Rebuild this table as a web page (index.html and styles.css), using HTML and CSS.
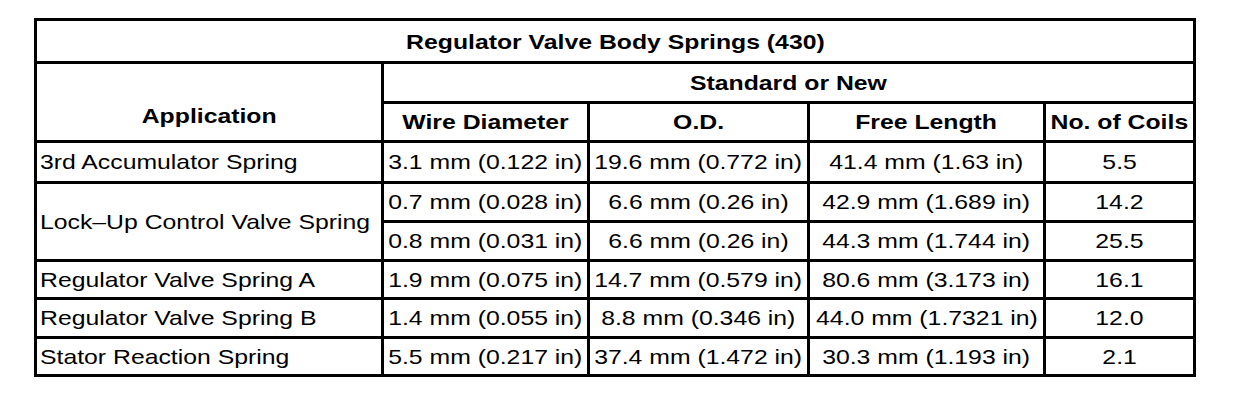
FILE: index.html
```html
<!DOCTYPE html>
<html>
<head>
<meta charset="utf-8">
<link rel="stylesheet" href="styles.css">
</head>
<body>
<div class="spec">
  <div class="cell title"><span class="t">Regulator Valve Body Springs (430)</span></div>
  <div class="cell app head"><span class="t">Application</span></div>
  <div class="cell std head"><span class="t">Standard or New</span></div>
  <div class="cell head"><span class="t">Wire Diameter</span></div>
  <div class="cell head"><span class="t">O.D.</span></div>
  <div class="cell head"><span class="t">Free Length</span></div>
  <div class="cell head"><span class="t">No. of Coils</span></div>

  <div class="cell name"><span class="t">3rd Accumulator Spring</span></div>
  <div class="cell"><span class="t">3.1 mm (0.122 in)</span></div>
  <div class="cell"><span class="t">19.6 mm (0.772 in)</span></div>
  <div class="cell"><span class="t">41.4 mm (1.63 in)</span></div>
  <div class="cell"><span class="t">5.5</span></div>

  <div class="cell name span2"><span class="t">Lock–Up Control Valve Spring</span></div>
  <div class="cell"><span class="t">0.7 mm (0.028 in)</span></div>
  <div class="cell"><span class="t">6.6 mm (0.26 in)</span></div>
  <div class="cell"><span class="t">42.9 mm (1.689 in)</span></div>
  <div class="cell"><span class="t">14.2</span></div>
  <div class="cell"><span class="t">0.8 mm (0.031 in)</span></div>
  <div class="cell"><span class="t">6.6 mm (0.26 in)</span></div>
  <div class="cell"><span class="t">44.3 mm (1.744 in)</span></div>
  <div class="cell"><span class="t">25.5</span></div>

  <div class="cell name"><span class="t">Regulator Valve Spring A</span></div>
  <div class="cell"><span class="t">1.9 mm (0.075 in)</span></div>
  <div class="cell"><span class="t">14.7 mm (0.579 in)</span></div>
  <div class="cell"><span class="t">80.6 mm (3.173 in)</span></div>
  <div class="cell"><span class="t">16.1</span></div>

  <div class="cell name"><span class="t">Regulator Valve Spring B</span></div>
  <div class="cell"><span class="t">1.4 mm (0.055 in)</span></div>
  <div class="cell"><span class="t">8.8 mm (0.346 in)</span></div>
  <div class="cell"><span class="t">44.0 mm (1.7321 in)</span></div>
  <div class="cell"><span class="t">12.0</span></div>

  <div class="cell name"><span class="t">Stator Reaction Spring</span></div>
  <div class="cell"><span class="t">5.5 mm (0.217 in)</span></div>
  <div class="cell"><span class="t">37.4 mm (1.472 in)</span></div>
  <div class="cell"><span class="t">30.3 mm (1.193 in)</span></div>
  <div class="cell"><span class="t">2.1</span></div>
</div>
</body>
</html>
```

FILE: styles.css
```css
html, body {
  margin: 0;
  padding: 0;
  background: #ffffff;
}

body {
  padding: 18px 0 0 34px;
  font-family: "Liberation Sans", Arial, sans-serif;
  font-size: 21px;
  color: #000000;
}

.spec {
  display: grid;
  width: 1156px;
  grid-template-columns: 344px 203px 217px 233px 147px;
  grid-template-rows: 40px 37px 36px 38px 36px 36px 35px 36px 35px;
  gap: 3px;
  padding: 3px;
  background: #000000;
}

.cell {
  background: #ffffff;
  display: flex;
  align-items: center;
  justify-content: center;
  white-space: nowrap;
  line-height: 24px;
}

.t {
  display: inline-block;
  transform: scaleX(1.18);
  transform-origin: center;
}

.head,
.title {
  font-weight: bold;
}

.title {
  grid-column: 1 / span 5;
  padding-top: 2px;
}

.app {
  grid-row: 2 / span 2;
  align-items: flex-end;
  padding-bottom: 12px;
}

.std {
  grid-column: 2 / span 4;
}

.name {
  justify-content: flex-start;
  padding-left: 3px;
}

.name .t {
  transform-origin: left center;
}

.span2 {
  grid-row: span 2;
}
```
